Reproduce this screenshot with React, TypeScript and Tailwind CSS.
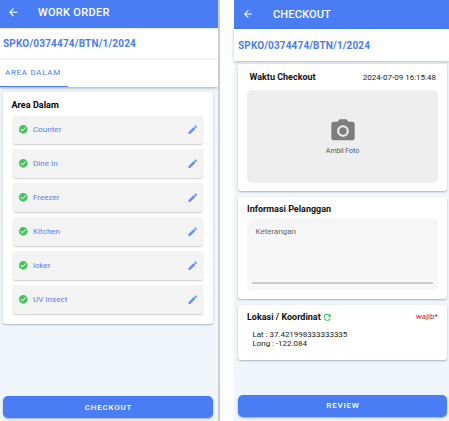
import type { ReactNode } from "react";
import { MdArrowBack, MdCameraAlt, MdCheckCircle, MdEdit, MdRefresh } from "react-icons/md";

const areas = ["Counter", "Dine In", "Freezer", "Kitchen", "loker", "UV Insect"];

function Card({ className, children }: { className: string; children: ReactNode }) {
  return (
    <section className={`rounded-[3px] bg-white shadow-[0_1px_2px_rgba(0,0,0,0.28)] ${className}`}>
      {children}
    </section>
  );
}

function AreaRow({ name }: { name: string }) {
  return (
    <li className="flex h-[28.9px] items-center rounded-[3px] bg-[#f3f3f3] pr-[4.5px] pl-[5px] shadow-[0_1px_1.5px_rgba(0,0,0,0.2)]">
      <MdCheckCircle className="mb-[1px] size-[10.5px] text-[#45c35a]" />
      <span className="mt-[1px] ml-[4.5px] text-[8px] leading-[10px] tracking-[0.03px] text-[#5580f0]">
        {name}
      </span>
      <MdEdit className="ml-auto size-[11.5px] text-[#6690f5]" />
    </li>
  );
}

function WorkOrder() {
  return (
    <main className="flex h-full w-[218px] flex-col bg-[#eff5fa]">
      <header className="flex h-[27.5px] shrink-0 items-center bg-[#4a7df3] pb-[2px] pl-[7px] text-white">
        <MdArrowBack className="mb-[1px] size-[12.5px]" />
        <h1 className="ml-[18.5px] text-[11px] leading-[13px] font-medium tracking-[0.3px]">WORK ORDER</h1>
      </header>
      <div className="flex h-[31.5px] shrink-0 items-center bg-white pt-[1px] pl-[3px] shadow-[inset_0_2px_2px_-1px_rgba(0,0,0,0.12)]">
        <h2 className="text-[10px] font-bold tracking-[0.18px] text-[#4a7df3]">SPKO/0374474/BTN/1/2024</h2>
      </div>
      <nav className="flex h-[27.5px] shrink-0 border-t border-[#eeeeee] bg-white shadow-[0_1px_3px_rgba(0,0,0,0.3)]">
        <button className="w-[68px] border-b border-[#4a7df3] pt-[1px] pl-[5px] text-left text-[8px] tracking-[0.7px] text-[#4a7df3]">
          AREA DALAM
        </button>
      </nav>
      <Card className="mt-[5.5px] mr-[5px] ml-[3px] h-[232px] pt-[6.5px] pr-[10px] pl-[10px]">
        <h3 className="-ml-[1.5px] text-[9px] leading-[12px] font-bold tracking-[0.05px] text-black">Area Dalam</h3>
        <ul className="mt-[5px] flex flex-col gap-[5px]">
          {areas.map((name) => (
            <AreaRow key={name} name={name} />
          ))}
        </ul>
      </Card>
      <button className="mt-auto mr-[5px] mb-[3px] ml-[3px] h-[22px] shrink-0 rounded-[5px] bg-[#4a7df3] pt-[1px] pl-[1px] text-[8px] font-medium tracking-[0.8px] text-white shadow-[0_1px_2px_rgba(0,0,0,0.3)]">
        CHECKOUT
      </button>
    </main>
  );
}

function Checkout() {
  return (
    <main className="flex h-full w-[215px] flex-col bg-[#eff5fa]">
      <header className="flex h-[29px] shrink-0 items-center bg-[#4a7df3] pb-[1px] pl-[8px] text-white">
        <MdArrowBack className="mb-[1px] size-[12px]" />
        <h1 className="mt-[1px] ml-[19px] text-[11px] leading-[13px] font-medium tracking-[0.15px]">CHECKOUT</h1>
      </header>
      <div className="flex h-[31.5px] shrink-0 items-center bg-white pt-[1.5px] pl-[4px] shadow-[0_1px_3px_rgba(0,0,0,0.25)]">
        <h2 className="text-[10px] font-bold tracking-[0.14px] text-[#4a7df3]">SPKO/0374474/BTN/1/2024</h2>
      </div>
      <Card className="mt-[3px] mr-[2px] ml-[4px] h-[127.5px] px-[9px] pt-[8px]">
        <div className="flex h-[12px] items-center justify-between pr-[2px] pl-[2.5px]">
          <h3 className="pt-[1px] text-[9px] font-bold text-[#111111]">Waktu Checkout</h3>
          <time className="text-[8px] text-[#222222]">2024-07-09 16:15:48</time>
        </div>
        <button className="mt-[6px] flex h-[93px] w-full flex-col items-center rounded-[5px] bg-[#eeeeee] pt-[27.5px]">
          <MdCameraAlt className="size-[28px] text-[#7d7d7d]" />
          <span className="mt-[2px] text-[7px] leading-[9px] tracking-[-0.05px] text-[#555555]">Ambil Foto</span>
        </button>
      </Card>
      <Card className="mt-[6px] mr-[2px] ml-[4px] h-[101.5px] px-[9px] pt-[6px]">
        <h3 className="text-[9px] leading-[12px] font-bold text-[#111111]">Informasi Pelanggan</h3>
        <div className="mt-[3px] flex h-[72px] flex-col justify-between rounded-[5px] bg-[#f6f6f6] px-[5px] pt-[9px] pb-[6px]">
          <label className="pl-[3.5px] text-[8px] leading-[10px] text-[#666666]">Keterangan</label>
          <div className="h-[2px] bg-[#cccccc]" />
        </div>
      </Card>
      <Card className="mt-[6.5px] mr-[2px] ml-[4px] h-[54.5px] px-[9px] pt-[6px]">
        <div className="flex h-[12px] items-center">
          <h3 className="pt-[1px] text-[9px] font-bold text-[#111111]">Lokasi / Koordinat</h3>
          <MdRefresh className="ml-[1.5px] size-[10.5px] text-[#3db653]" />
          <span className="ml-auto text-[8px] text-[#b8294d]">wajib*</span>
        </div>
        <p className="mt-[6.5px] pl-[5.5px] text-[8px] leading-[9.3px] tracking-[-0.04px] text-[#222222]">
          Lat : 37.421998333333335
          <br />
          Long : -122.084
        </p>
      </Card>
      <button className="mt-auto mr-[2px] mb-[4.5px] ml-[4px] h-[22px] shrink-0 rounded-[5px] bg-[#4a7df3] pt-[1px] pl-[1px] text-[8px] font-medium tracking-[0.8px] text-white shadow-[0_1px_2px_rgba(0,0,0,0.3)]">
        REVIEW
      </button>
    </main>
  );
}

export default function App() {
  return (
    <div className="flex h-[421px] w-[449px] overflow-hidden bg-[#fcfefe] font-['Roboto',sans-serif]">
      <WorkOrder />
      <div className="mr-[14px] w-[2px] bg-[#cbcdd2]" />
      <Checkout />
    </div>
  );
}
